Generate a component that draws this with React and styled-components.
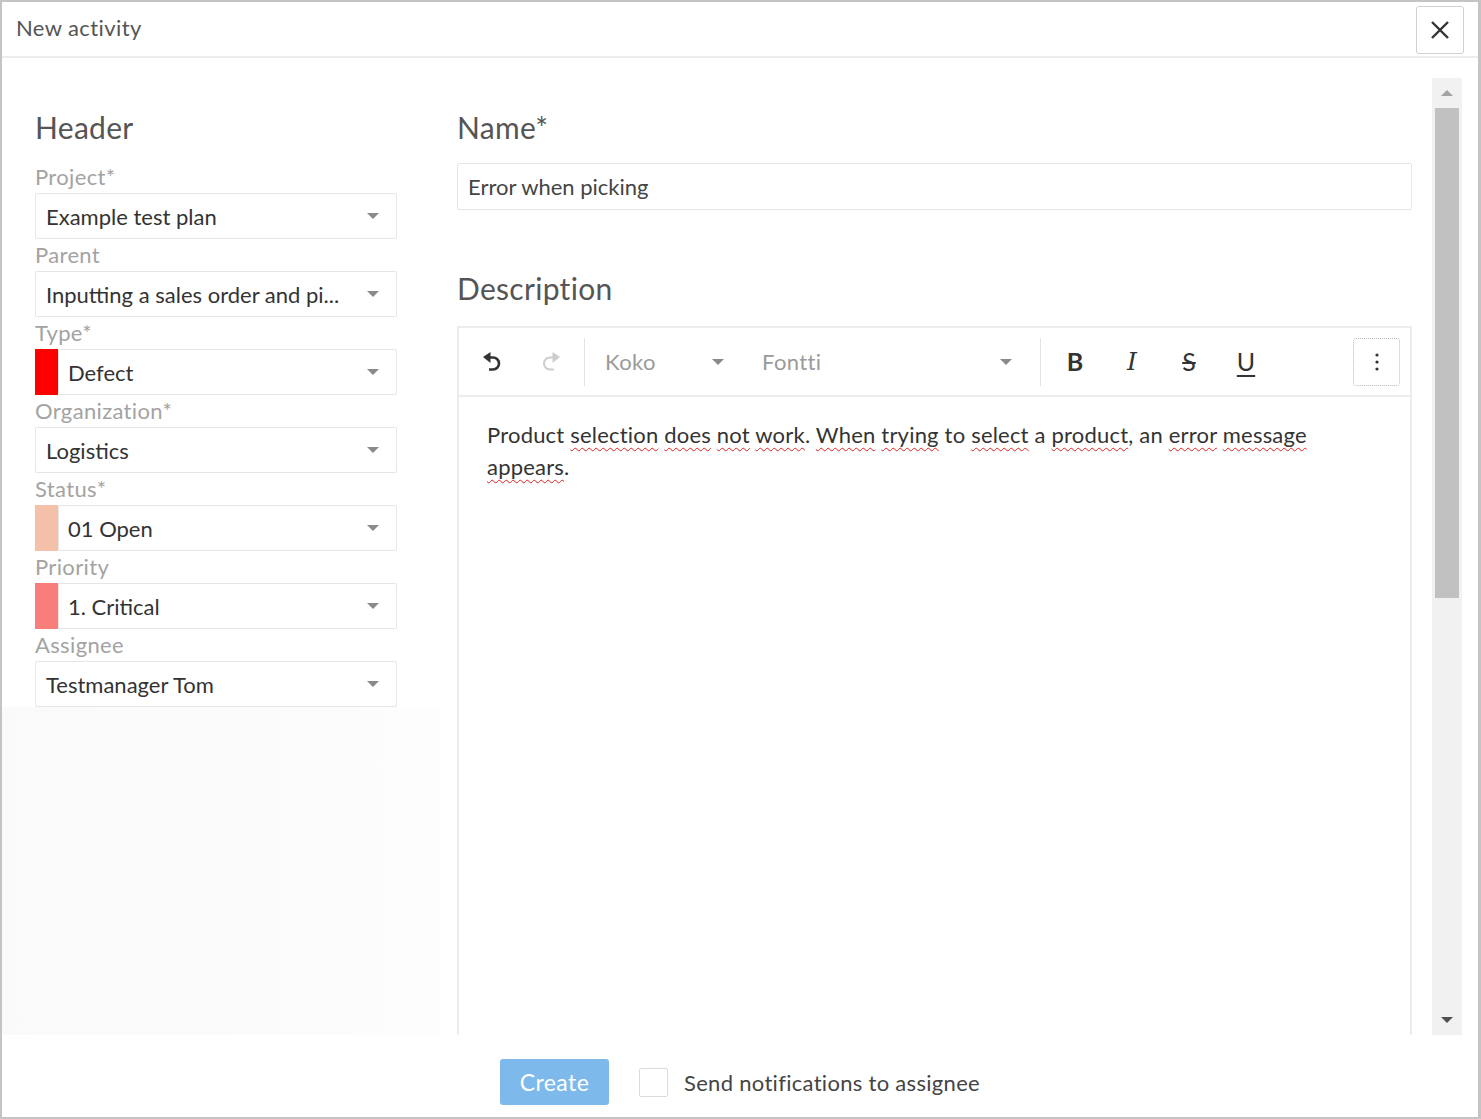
import React from "react";
import styled, { createGlobalStyle } from "styled-components";

const Global = createGlobalStyle`
  html, body { margin: 0; padding: 0; background: #fff; }
  body { font-family: Lato, "Open Sans", "Liberation Sans", sans-serif; }
  * { box-sizing: border-box; }
`;

const Modal = styled.div`
  width: 1481px;
  height: 1119px;
  border: 2px solid #c4c4c4;
  border-right-width: 3px;
  display: flex;
  flex-direction: column;
  background: #fff;
`;

const TitleBar = styled.div`
  height: 56px;
  flex: none;
  border-bottom: 2px solid #ececec;
  display: flex;
  align-items: center;
  justify-content: space-between;
  padding: 0 14px 0 14px;
`;

const Title = styled.div`
  font-size: 22px;
  letter-spacing: 0.4px;
  color: #555;
  margin-top: -3px;
`;

const CloseButton = styled.button`
  width: 48px;
  height: 48px;
  margin-top: 2px;
  border: 1px solid #cfcfcf;
  border-radius: 3px;
  background: #fff;
  display: flex;
  align-items: center;
  justify-content: center;
  padding: 0;
`;

const Body = styled.div`
  flex: none;
  display: flex;
  padding-top: 20px;
`;

const Viewport = styled.div`
  flex: 1;
  display: flex;
  overflow: hidden;
  height: 957px;
`;

const LeftPanel = styled.div`
  width: 438px;
  display: flex;
  flex-direction: column;
  padding: 29px 43px 0 33px;
`;

const Filler = styled.div`
  flex: 1;
  margin: 0 -43px 0 -33px;
  background: linear-gradient(90deg, #fafafa 0%, #fbfbfb 60%, #fdfdfd 100%);
`;

const RightPanel = styled.div`
  flex: 1;
  display: flex;
  flex-direction: column;
  padding: 29px 20px 0 17px;
`;

const SectionTitle = styled.div`
  font-size: 30px;
  letter-spacing: 0.3px;
  line-height: 40px;
  color: #555;
  margin-bottom: ${(p) => p.$mb || 0}px;
  margin-top: ${(p) => p.$mt || 0}px;
`;

const Label = styled.div`
  font-size: 22px;
  letter-spacing: 0.35px;
  line-height: 32px;
  height: 32px;
  color: #a3a3a3;
`;

const SelectRow = styled.div`
  display: flex;
  height: 46px;
`;

const Swatch = styled.div`
  width: 23px;
  background: ${(p) => p.$color};
`;

const SelectBox = styled.div`
  flex: 1;
  display: flex;
  align-items: center;
  justify-content: space-between;
  border: 1px solid #e6e6e6;
  border-radius: 2px;
  padding: 0 17px 0 ${(p) => (p.$swatch ? 9 : 10)}px;
  font-size: 22px;
  color: #333;
  white-space: nowrap;
`;

const Caret = styled.span`
  width: 0;
  height: 0;
  border-left: 6px solid transparent;
  border-right: 6px solid transparent;
  border-top: 6px solid #8a8a8a;
  flex: none;
`;

const TextInput = styled.div`
  height: 47px;
  border: 1px solid #e6e6e6;
  border-radius: 2px;
  display: flex;
  align-items: center;
  padding-left: 10px;
  font-size: 22px;
  color: #444;
`;

const Editor = styled.div`
  flex: 1;
  border: 2px solid #ececec;
  border-bottom: none;
  display: flex;
  flex-direction: column;
`;

const Toolbar = styled.div`
  height: 69px;
  border-bottom: 2px solid #ececec;
  display: flex;
  align-items: center;
  padding: 0 10px 0 11px;
`;

const ToolButton = styled.div`
  width: 46px;
  height: 46px;
  margin-right: ${(p) => p.$mr ?? 11}px;
  display: flex;
  align-items: center;
  justify-content: center;
  color: ${(p) => (p.$disabled ? "#c8c8c8" : "#333")};
  font-size: 24px;
  flex: none;
`;

const Glyph = styled.span`
  font-family: ${(p) => (p.$serif ? '"DejaVu Serif", "Liberation Serif", serif' : 'Lato, "Liberation Sans", sans-serif')};
  font-weight: ${(p) => (p.$bold ? 700 : 400)};
  font-style: ${(p) => (p.$italic ? "italic" : "normal")};
  text-decoration: ${(p) => p.$deco || "none"};
  text-decoration-thickness: 2px;
  text-underline-offset: 4px;
  font-size: ${(p) => p.$size || 25}px;
  line-height: 1;
`;

const Separator = styled.div`
  width: 1px;
  height: 48px;
  background: #e4e4e4;
  margin: 0 ${(p) => p.$mr || 10}px 0 0;
  flex: none;
`;

const Dropdown = styled.div`
  width: ${(p) => p.$w}px;
  display: flex;
  align-items: center;
  justify-content: space-between;
  padding: 0 ${(p) => p.$pr}px 0 10px;
  font-size: 22px;
  letter-spacing: 0.4px;
  color: #9a9a9a;
  margin-right: ${(p) => p.$mr || 0}px;
  flex: none;
`;

const Spacer = styled.div`
  flex: 1;
`;

const MoreButton = styled.div`
  width: 47px;
  height: 48px;
  border: 1px dotted #bdbdbd;
  border-radius: 3px;
  display: flex;
  align-items: center;
  justify-content: center;
`;

const Content = styled.div`
  padding: 22px 28px;
  font-size: 22px;
  letter-spacing: 0.2px;
  line-height: 32px;
  color: #333;
`;

const Misspelled = styled.span`
  text-decoration: underline wavy #e02020;
  text-decoration-thickness: 1px;
  text-decoration-skip-ink: none;
  text-underline-offset: 4px;
`;

const ScrollTrack = styled.div`
  width: 30px;
  height: 957px;
  background: #f1f1f1;
  margin-right: 16px;
  display: flex;
  flex-direction: column;
  align-items: center;
`;

const ArrowCell = styled.div`
  height: 30px;
  width: 30px;
  display: flex;
  align-items: center;
  justify-content: center;
`;

const Thumb = styled.div`
  width: 24px;
  height: 490px;
  background: #c1c1c1;
`;

const Footer = styled.div`
  flex: 1;
  display: flex;
  align-items: center;
  justify-content: center;
  padding-top: 12px;
`;

const CreateButton = styled.button`
  width: 109px;
  height: 46px;
  border: none;
  border-radius: 3px;
  background: #7db9ea;
  color: #fff;
  font-family: Lato, "Liberation Sans", sans-serif;
  font-size: 23px;
  letter-spacing: 0.4px;
  margin-right: 30px;
`;

const Checkbox = styled.div`
  width: 29px;
  height: 29px;
  border: 1px solid #dcdcdc;
  border-radius: 2px;
  margin-right: 16px;
`;

const CheckLabel = styled.div`
  font-size: 22px;
  letter-spacing: 0.3px;
  color: #444;
`;

const fields = [
  { label: "Project*", value: "Example test plan" },
  { label: "Parent", value: "Inputting a sales order and pi..." },
  { label: "Type*", value: "Defect", color: "#ff0000" },
  { label: "Organization*", value: "Logistics" },
  { label: "Status*", value: "01 Open", color: "#f4c0aa" },
  { label: "Priority", value: "1. Critical", color: "#f77e7b" },
  { label: "Assignee", value: "Testmanager Tom" },
];

const UndoIcon = ({ color, weight = 2.6, flip }) => (
  <svg
    width="26"
    height="26"
    viewBox="0 0 26 26"
    fill="none"
    style={flip ? { transform: "scaleX(-1)" } : undefined}
  >
    <path d="M9 8.5 H13 A6 6 0 0 1 13 20.5 H9" stroke={color} strokeWidth={weight} />
    <path d="M3 8 L10.5 3 L10.5 14 Z" fill={color} />
  </svg>
);

export default function App() {
  return (
    <>
      <Global />
      <Modal>
        <TitleBar>
          <Title>New activity</Title>
          <CloseButton aria-label="Close">
            <svg width="22" height="22" viewBox="0 0 22 22" stroke="#333" strokeWidth="2.4">
              <path d="M3 3 L19 19 M19 3 L3 19" />
            </svg>
          </CloseButton>
        </TitleBar>
        <Body>
          <Viewport>
            <LeftPanel>
              <SectionTitle $mb={14}>Header</SectionTitle>
              {fields.map((f) => (
                <div key={f.label}>
                  <Label>{f.label}</Label>
                  <SelectRow>
                    {f.color && <Swatch $color={f.color} />}
                    <SelectBox $swatch={!!f.color}>
                      <span>{f.value}</span>
                      <Caret />
                    </SelectBox>
                  </SelectRow>
                </div>
              ))}
              <Filler />
            </LeftPanel>
            <RightPanel>
              <SectionTitle $mb={16}>Name*</SectionTitle>
              <TextInput>Error when picking</TextInput>
              <SectionTitle $mt={58} $mb={18}>Description</SectionTitle>
              <Editor>
                <Toolbar>
                  <ToolButton>
                    <UndoIcon color="#333" />
                  </ToolButton>
                  <ToolButton $disabled $mr={11}>
                    <UndoIcon color="#cdcdcd" weight={2} flip />
                  </ToolButton>
                  <Separator $mr={10} />
                  <Dropdown $w={140} $pr={11} $mr={17}>
                    <span>Koko</span>
                    <Caret />
                  </Dropdown>
                  <Dropdown $w={268} $pr={8} $mr={20}>
                    <span>Fontti</span>
                    <Caret />
                  </Dropdown>
                  <Separator $mr={11} />
                  <ToolButton>
                    <Glyph $bold>B</Glyph>
                  </ToolButton>
                  <ToolButton>
                    <Glyph $serif $italic $size={25}>I</Glyph>
                  </ToolButton>
                  <ToolButton>
                    <Glyph $deco="line-through">S</Glyph>
                  </ToolButton>
                  <ToolButton>
                    <Glyph $deco="underline">U</Glyph>
                  </ToolButton>
                  <Spacer />
                  <MoreButton>
                    <svg width="6" height="20" viewBox="0 0 6 20" fill="#333">
                      <circle cx="3" cy="3" r="1.6" />
                      <circle cx="3" cy="10" r="1.6" />
                      <circle cx="3" cy="17" r="1.6" />
                    </svg>
                  </MoreButton>
                </Toolbar>
                <Content>
                  Product <Misspelled>selection</Misspelled> <Misspelled>does</Misspelled>{" "}
                  <Misspelled>not</Misspelled> <Misspelled>work</Misspelled>.{" "}
                  <Misspelled>When</Misspelled> <Misspelled>trying</Misspelled> to{" "}
                  <Misspelled>select</Misspelled> a <Misspelled>product</Misspelled>, an{" "}
                  <Misspelled>error</Misspelled> <Misspelled>message</Misspelled>
                  <br />
                  <Misspelled>appears</Misspelled>.
                </Content>
              </Editor>
            </RightPanel>
          </Viewport>
          <ScrollTrack>
            <ArrowCell>
              <svg width="12" height="8" viewBox="0 0 12 8">
                <path d="M0 7 L6 1 L12 7 Z" fill="#a3a3a3" />
              </svg>
            </ArrowCell>
            <Thumb />
            <Spacer />
            <ArrowCell>
              <svg width="12" height="8" viewBox="0 0 12 8">
                <path d="M0 1 L12 1 L6 7 Z" fill="#505050" />
              </svg>
            </ArrowCell>
          </ScrollTrack>
        </Body>
        <Footer>
          <CreateButton>Create</CreateButton>
          <Checkbox />
          <CheckLabel>Send notifications to assignee</CheckLabel>
        </Footer>
      </Modal>
    </>
  );
}
